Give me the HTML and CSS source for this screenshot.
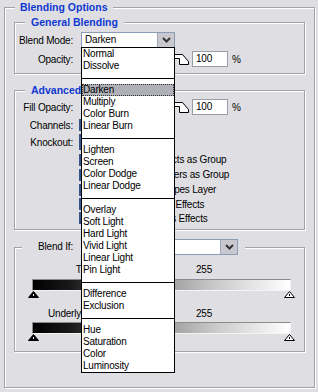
FILE: index.html
```html
<!DOCTYPE html>
<html lang="en">
<head>
    <meta charset="UTF-8">
    <meta name="viewport" content="width=device-width, initial-scale=1.0">
    <title>Blending Options</title>
    <link rel="stylesheet" href="styles.css">
</head>
<body>
<div class="dialog">
    <div class="box outer">
        <div class="legend">Blending Options</div>

        <div class="box group general">
            <div class="legend">General Blending</div>
            <div class="row mode-row">
                <span class="label">Blend Mode:</span>
                <div class="select mode">
                    <span class="value">Darken</span>
                    <span class="arrow"><svg width="9" height="6" viewBox="0 0 9 6"><polyline points="1,1 4.5,4.5 8,1" fill="none" stroke="#333" stroke-width="2"/></svg></span>
                </div>
            </div>
            <div class="row opacity-row">
                <span class="label">Opacity:</span>
                <span class="track"></span>
                <svg class="thumb" width="16" height="12" viewBox="0 0 16 12"><path d="M0.5 0.5 H8.5 L14.5 7.5 V10.5 H5.5 V4.5 H0.5 Z" fill="#fff" stroke="#000"/></svg>
                <span class="field">100</span>
                <span class="unit">%</span>
            </div>
        </div>

        <div class="box group advanced">
            <div class="legend">Advanced Blending</div>
            <div class="row fill-row">
                <span class="label">Fill Opacity:</span>
                <span class="track"></span>
                <svg class="thumb" width="16" height="12" viewBox="0 0 16 12"><path d="M0.5 0.5 H8.5 L14.5 7.5 V10.5 H5.5 V4.5 H0.5 Z" fill="#fff" stroke="#000"/></svg>
                <span class="field">100</span>
                <span class="unit">%</span>
            </div>
            <div class="row channels-row">
                <span class="label narrow">Channels:</span>
                <span class="tick"></span>
                <span class="tick"></span>
                <span class="tick"></span>
            </div>
            <div class="row knockout-row">
                <span class="label narrow">Knockout:</span>
                <div class="select knockout"></div>
            </div>
            <div class="checks">
                <div class="check"><span class="tick"></span>Blend Interior Effects as Group</div>
                <div class="check"><span class="tick"></span>Blend Clipped Layers as Group</div>
                <div class="check"><span class="tick"></span>Transparency Shapes Layer</div>
                <div class="check short"><span class="tick"></span>Layer Mask Hides Effects</div>
                <div class="check short"><span class="tick"></span>Vector Mask Hides Effects</div>
            </div>
        </div>

        <div class="box group blendif">
            <div class="legend row if-row">
                <span class="label">Blend If:</span>
                <div class="select channel-select">
                    <span class="value"></span>
                    <span class="arrow"><svg width="9" height="6" viewBox="0 0 9 6"><polyline points="1,1 4.5,4.5 8,1" fill="none" stroke="#333" stroke-width="2"/></svg></span>
                </div>
            </div>

            <div class="levels this-layer">
                <span class="level-label">This Layer:</span>
                <span class="high">255</span>
            </div>
            <div class="bar"></div>
            <div class="stops">
                <svg width="11" height="7" viewBox="0 0 11 7"><path d="M5.5 0.5 L10.5 6.5 H0.5 Z" fill="#000" stroke="#000"/><rect x="5" y="3" width="1" height="2" fill="#fff"/></svg>
                <svg width="11" height="7" viewBox="0 0 11 7"><path d="M5.5 0.5 L10.5 6.5 H0.5 Z" fill="#fff" stroke="#000"/><path d="M5.5 3 V5" stroke="#000"/></svg>
            </div>

            <div class="levels under-layer">
                <span class="level-label">Underlying Layer:</span>
                <span class="high">255</span>
            </div>
            <div class="bar"></div>
            <div class="stops">
                <svg width="11" height="7" viewBox="0 0 11 7"><path d="M5.5 0.5 L10.5 6.5 H0.5 Z" fill="#000" stroke="#000"/><rect x="5" y="3" width="1" height="2" fill="#fff"/></svg>
                <svg width="11" height="7" viewBox="0 0 11 7"><path d="M5.5 0.5 L10.5 6.5 H0.5 Z" fill="#fff" stroke="#000"/><path d="M5.5 3 V5" stroke="#000"/></svg>
            </div>
        </div>
    </div>

    <!-- open blend mode popup -->
    <ul class="menu">
        <li>Normal</li>
        <li>Dissolve</li>
        <li class="sep"></li>
        <li class="on">Darken</li>
        <li>Multiply</li>
        <li>Color Burn</li>
        <li>Linear Burn</li>
        <li class="sep"></li>
        <li>Lighten</li>
        <li>Screen</li>
        <li>Color Dodge</li>
        <li>Linear Dodge</li>
        <li class="sep"></li>
        <li>Overlay</li>
        <li>Soft Light</li>
        <li>Hard Light</li>
        <li>Vivid Light</li>
        <li>Linear Light</li>
        <li>Pin Light</li>
        <li class="sep"></li>
        <li>Difference</li>
        <li>Exclusion</li>
        <li class="sep"></li>
        <li>Hue</li>
        <li>Saturation</li>
        <li>Color</li>
        <li>Luminosity</li>
    </ul>
</div>
</body>
</html>
```

FILE: styles.css
```css
body {
    margin: 0;
    background: #dfdfe3;
    font-family: "Liberation Sans", Arial, sans-serif;
    font-size: 10px;
    letter-spacing: -0.2px;
    color: #000;
}

.dialog {
    position: relative;
    width: 318px;
    height: 392px;
    padding: 7px 0 0 4px;
    box-sizing: border-box;
    overflow: hidden;
}

/* etched frames */
.box {
    box-sizing: border-box;
    border: 1px solid #a2a2a8;
    box-shadow: 1px 1px 0 #fff, inset 1px 1px 0 #fff;
}

.outer {
    width: 311px;
    height: 381px;
    padding-left: 9px;
}

.group { width: 291px; }
.general { height: 52px; margin-top: 8px; }
.advanced { height: 140px; margin-top: 16px; }
.blendif { height: 105px; margin-top: 17px; }

.legend {
    width: max-content;
    height: 14px;
    line-height: 14px;
    margin: -8px 0 0 10px;
    padding: 0 6px;
    background: #dfdfe3;
    color: #1038d0;
    font-weight: bold;
    font-size: 10.5px;
    letter-spacing: 0;
}

.outer > .legend {
    margin-left: 1px;
    padding: 0 5px;
}

.row {
    display: flex;
    align-items: center;
    height: 16px;
}

.label {
    flex-shrink: 0;
    width: 58px;
    margin-right: 8px;
    text-align: right;
}

.label.narrow { margin-right: 6px; }

.mode-row { margin-top: 3px; }
.opacity-row { margin-top: 3px; }
.fill-row { margin-top: 2px; }
.channels-row { margin-top: 2px; }
.knockout-row { margin-top: 1px; }

.select {
    display: flex;
    height: 16px;
    box-sizing: border-box;
    border: 1px solid #8b9bb5;
    background: #fff;
}

.select .value {
    flex: 1;
    padding-left: 3px;
    line-height: 14px;
}

.select .arrow {
    display: flex;
    align-items: center;
    justify-content: center;
    width: 16px;
    background: #c8c8ce;
    border-left: 1px solid #9aa6ba;
}

.mode { width: 94px; }
.knockout { width: 80px; border: 2px solid #35548c; }
.channel-select { width: 157px; }

.track {
    width: 93px;
    height: 1px;
    background: #000;
}

.thumb {
    align-self: flex-end;
    margin-bottom: 1px;
}

.field {
    width: 36px;
    height: 16px;
    margin-left: 2px;
    box-sizing: border-box;
    padding-left: 3px;
    border: 1px solid #9c9ca4;
    background: #fff;
    line-height: 14px;
}

.unit { margin-left: 4px; }

.tick {
    flex-shrink: 0;
    width: 12px;
    height: 12px;
    box-sizing: border-box;
    border: 2px solid #35548c;
    background: #fff;
    margin-right: 5px;
}

.channels-row .tick { margin-right: 20px; }

.checks { margin-top: 2px; }

.check {
    display: flex;
    align-items: center;
    height: 15px;
    padding-left: 64px;
}

.check.short { height: 14px; }

.if-row {
    margin: -9px 0 0 7px;
    padding: 0 7px 0 0;
    height: 16px;
    color: #000;
    font-weight: normal;
    font-size: 10px;
    letter-spacing: -0.2px;
    line-height: 16px;
}

.if-row .label { width: 51px; }

.levels {
    display: flex;
    align-items: center;
    height: 15px;
}

.this-layer { margin-top: 7px; }
.under-layer { margin-top: 8px; }

.level-label {
    width: 108px;
    margin-right: 73px;
    text-align: right;
}

.bar {
    width: 259px;
    height: 12px;
    margin: 2px 0 0 17px;
    box-sizing: border-box;
    border: 1px solid;
    border-color: #8c8c90 #f4f4f4 #f4f4f4 #8c8c90;
    background: linear-gradient(to right, #000 0%, #1a1a1a 15%, #8a8a8a 45%, #c8c8c8 70%, #fff 100%);
}

.under-layer + .bar { margin-top: 1px; }

.stops {
    display: flex;
    justify-content: space-between;
    width: 267px;
    height: 7px;
    margin-left: 13px;
}

.stops svg { display: block; }

.menu {
    position: absolute;
    left: 81px;
    top: 47px;
    width: 94px;
    height: 326px;
    margin: 0;
    padding: 0;
    box-sizing: border-box;
    list-style: none;
    border: 1px solid #000;
    background: #fff;
}

.menu li {
    height: 12px;
    line-height: 12px;
    padding-left: 1px;
    white-space: nowrap;
}

.menu .sep {
    height: 6px;
    border-bottom: 1px solid #000;
    margin-bottom: 5px;
}

.menu .on {
    background: #b0b0b9;
    outline: 1px dotted #333;
    outline-offset: -1px;
}
```
